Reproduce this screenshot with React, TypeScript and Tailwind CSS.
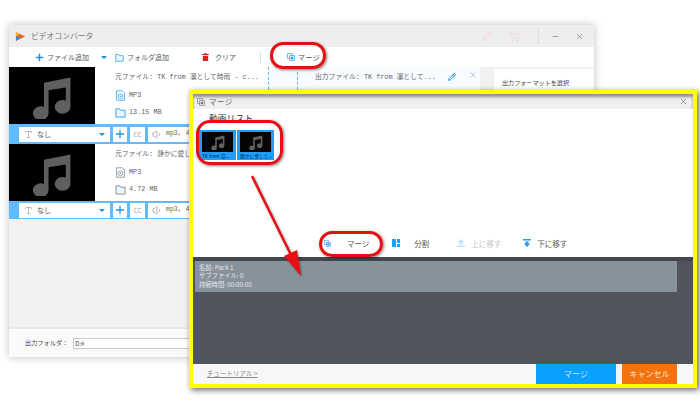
import { KeyRound, Minus, Pencil, Plus, ShoppingCart, Type, Volume1, X } from "lucide-react";

const font = "font-['Noto_Sans_CJK_JP','Noto_Sans',sans-serif]";
const mono = "font-['Liberation_Mono','Noto_Sans_CJK_JP',monospace]";

const NoteIcon = ({ className }: { className: string }) => (
  <svg viewBox="0 0 40 40" className={className}>
    <path
      fill="currentColor"
      d="M13 8.500 36 4v25.500a6.800 6 0 1 1-4-5.500V12.500L17 15v20a6.800 6 0 1 1-4-5.500z"
    />
  </svg>
);

const MergeIcon = ({ className }: { className: string }) => (
  <svg viewBox="0 0 12 12" className={className}>
    <rect x="1" y="1" width="7" height="7" fill="none" stroke="currentColor" />
    <rect x="4" y="4" width="7" height="7" fill="#fff" stroke="currentColor" />
    <rect x="5.500" y="5.500" width="4" height="4" fill="currentColor" />
  </svg>
);

const FolderIcon = ({ className }: { className: string }) => (
  <svg viewBox="0 0 12 12" className={className}>
    <path d="M1 2h4l1 1.500h5V11H1z" fill="#e8f5ff" stroke="currentColor" />
  </svg>
);

const DiscIcon = () => (
  <svg viewBox="0 0 14 14" className="h-[11px] w-[11px]">
    <path d="M2 1h7l3 3v9H2z" fill="none" stroke="currentColor" />
    <circle cx="7" cy="8" r="3" fill="none" stroke="currentColor" />
    <circle cx="7" cy="8" r="1" fill="currentColor" />
  </svg>
);

const Caret = ({ className }: { className: string }) => (
  <span className={`h-0 w-0 border-x-[3px] border-t-[3px] border-x-transparent border-t-[#1d8fe0] ${className}`} />
);

type TrackRowProps = { title: string; size: string; active?: boolean; compact?: boolean };

const TrackRow = ({ title, size, active, compact }: TrackRowProps) => (
  <div>
    <div className="flex h-[57px]">
      <div className="flex w-[86px] items-center justify-center bg-black">
        <NoteIcon className="h-[46px] w-[46px] text-[#5f5f5f]" />
      </div>
      <div className={`flex flex-col pl-[20px] text-[6.800px] text-[#666] ${mono}`}>
        <span className="mt-[5px] h-[10px] whitespace-nowrap leading-[10px]">{title}</span>
        <div className={`mt-[8px] flex h-[11px] items-center ${active ? "text-[#29a3f5]" : "text-[#7f8a94]"}`}>
          <DiscIcon />
          <span className="ml-[3px] text-[#666]">MP3</span>
        </div>
        <div className={`mt-[6px] flex h-[11px] items-center ${active ? "text-[#29a3f5]" : "text-[#8a8a8a]"}`}>
          <FolderIcon className="h-[11px] w-[11px]" />
          <span className="ml-[3px] text-[#666]">{size}</span>
        </div>
      </div>
    </div>
    <div className={`flex items-center gap-[2px] bg-[#62baff] pl-[10px] ${compact ? "h-[18px]" : "h-[20px]"}`}>
      <div className="flex h-[15px] w-[91px] items-center bg-white px-[5px] text-[7px] text-[#555]">
        <Type size={9} strokeWidth={1.2} className="text-[#777]" />
        <span className="ml-[4px]">なし</span>
        <Caret className="ml-auto" />
      </div>
      <div className="ml-[1px] flex h-[15px] w-[14px] items-center justify-center bg-white">
        <Plus size={12} strokeWidth={2.6} className="text-[#1b92e8]" />
      </div>
      <div className="ml-[1px] flex h-[15px] w-[15px] items-center justify-center bg-white text-[8px] text-[#b5b5b5]">cc</div>
      <div className={`ml-[1px] flex h-[15px] w-[50px] items-center bg-white pl-[4px] text-[6.500px] text-[#666] ${mono}`}>
        <Volume1 size={11} strokeWidth={1} />
        <span className="ml-[3px] whitespace-nowrap">mp3, 4</span>
      </div>
    </div>
  </div>
);

const MergeThumb = ({ label }: { label: string }) => (
  <div className="flex h-[30px] w-[37px] flex-col bg-[#1f9ffa] px-[3px] pt-[2px]">
    <div className="flex h-[20px] items-center justify-center bg-[#050505]">
      <NoteIcon className="h-[16px] w-[16px] text-[#606060]" />
    </div>
    <span className="mt-[1px] whitespace-nowrap text-[4.800px] leading-[6px] text-[#06264a]">{label}</span>
  </div>
);

export default function App() {
  return (
    <div className={`relative h-[407px] w-[700px] overflow-hidden bg-white ${font}`}>
      {/* main converter window */}
      <div className="absolute left-[9px] top-[25px] flex h-[332px] w-[585px] flex-col bg-[#f1f1f1] shadow-[0_0_8px_rgba(0,0,0,0.25)]">
        <div className="flex h-[22px] items-center bg-[#eeeeee] pl-[6px] text-[7.800px] text-[#777]">
          <svg viewBox="0 0 12 12" className="h-[11px] w-[11px]">
            <path d="M1 1l10 5-10 5z" fill="#ef5a2c" />
            <path d="M1 1l5 2.500L1 6z" fill="#f6b21b" />
            <path d="M1 6l5 1-5 4z" fill="#2b8fd8" />
          </svg>
          <span className="ml-[5px]">ビデオコンバータ</span>
          <div className="ml-auto flex items-center text-[#f3c9c4]">
            <KeyRound size={10} strokeWidth={1.2} />
            <ShoppingCart size={11} strokeWidth={1.2} className="ml-[17px]" />
            <div className="ml-[18px] h-[16px] w-px bg-[#dddddd]" />
            <Minus size={9} className="ml-[12px] text-[#888]" />
            <X size={9} className="ml-[15px] mr-[10px] text-[#888]" />
          </div>
        </div>
        <div className="flex h-[20px] items-center bg-white text-[7px] text-[#555]">
          <Plus size={11} strokeWidth={3} className="ml-[25px] text-[#1b92e8]" />
          <span className="ml-[2px]">ファイル追加</span>
          <Caret className="ml-[12px]" />
          <FolderIcon className="ml-[8px] h-[9px] w-[9px] text-[#29a3f5]" />
          <span className="ml-[3px]">フォルダ追加</span>
          <svg viewBox="0 0 10 12" className="ml-[33px] h-[8px] w-[7px] text-[#d8231f]">
            <path fill="currentColor" d="M3.500 0h3v1.500H10V3H0V1.500h3.500zM1 4h8v8H1z" />
          </svg>
          <span className="ml-[6px]">クリア</span>
          <div className="ml-[24px] h-[11px] w-px bg-[#dddddd]" />
          <MergeIcon className="ml-[26px] h-[8px] w-[8px] text-[#2a9df4]" />
          <span className="ml-[3px] tracking-[0.4px]">マージ</span>
        </div>
        <div className="flex">
          <div className="w-[471px] bg-white">
            <div className="relative">
              <TrackRow title="元ファイル: TK from 凛として時雨 - c..." size="13.15 MB" active />
              {/* dashed dividers, output name and row actions of the first track */}
              <div className={`absolute left-[259px] top-0 flex h-[57px] w-[212px] border-l border-dashed border-[#6db9f3] bg-[#f8fbff] pl-[28px] pt-[5px] text-[6.800px] leading-[10px] text-[#666] ${mono}`}>
                <div className="h-[57px] border-l border-dashed border-[#6db9f3]" />
                <span className="ml-[17px] whitespace-nowrap">出力ファイル: TK from 凛として...</span>
                <Pencil size={8} strokeWidth={3} className="absolute left-[179px] top-[6px] text-[#1f8fe8]" />
                <X size={8} className="absolute left-[200px] top-[4px] text-[#aaa]" />
              </div>
            </div>
            <TrackRow title="元ファイル: 静かに愛して..." size="4.72 MB" compact />
          </div>
          <div className="ml-[14px] mt-[2px] h-[50px] flex-1 bg-white pl-[8px] pt-[9px] text-[6.100px] text-[#444]">
            出力フォーマットを選択
          </div>
        </div>
        <div className="mt-auto flex h-[30px] items-center border-t-2 border-[#e8e8e8] bg-[#fafafa] pl-[16px] text-[6.200px] text-[#444]">
          出力フォルダ：
          <div className="ml-[5px] flex h-[11px] w-[300px] items-center border border-[#cccccc] bg-white pl-[1px] text-[6px]">
            D:¥
          </div>
        </div>
      </div>

      {/* merge dialog on top of the main window */}
      <div className="absolute left-[189px] top-[90px] flex h-[298px] w-[508px] flex-col border-[4px] border-[#ffff00] bg-white shadow-[2px_2px_6px_rgba(0,0,0,0.6)]">
        <div className="flex h-[15px] items-center bg-[#efefef] pl-[4px] text-[7.500px] text-[#666] shadow-[inset_0_3px_3px_rgba(0,0,0,0.4)]">
          <MergeIcon className="h-[8px] w-[8px] text-[#777]" />
          <span className="ml-[4px] tracking-[0.4px]">マージ</span>
          <X size={9} className="ml-auto mr-[5px] text-[#777]" />
        </div>
        <div className="flex flex-1 flex-col">
          <span className="ml-[16px] mt-[3px] text-[8.800px] leading-[14px] text-[#333]">動画リスト</span>
          <div className="ml-[6px] mt-[4px] flex gap-[1px]">
            <MergeThumb label="TK from 凛..." />
            <MergeThumb label="静かに愛して..." />
          </div>
          <div className="mb-[8px] mt-auto flex items-center pl-[131px] text-[7.500px] text-[#555]">
            <MergeIcon className="h-[7px] w-[7px] text-[#2a9df4]" />
            <span className="ml-[16px]">マージ</span>
            <span className="ml-[23px] flex h-[8px] w-[8px] gap-px">
              <span className="w-[4px] bg-[#1f9ffa]" />
              <span className="flex w-[3px] flex-col gap-px">
                <span className="h-[3.500px] bg-[#1f9ffa]" />
                <span className="h-[3.500px] bg-[#1f9ffa]" />
              </span>
            </span>
            <span className="ml-[14px]">分割</span>
            <svg viewBox="0 0 10 10" className="ml-[28px] h-[8px] w-[8px] text-[#bfe3fb]">
              <path fill="currentColor" d="M5 0l4 4H7v3H3V4H1zM0 8h10v2H0z" />
            </svg>
            <span className="ml-[6px] text-[#c4c4c4]">上に移す</span>
            <svg viewBox="0 0 10 10" className="ml-[22px] h-[8px] w-[8px] text-[#1f9ffa]">
              <path fill="currentColor" d="M0 0h10v2H0zM3 3h4v3h2l-4 4-4-4h2z" />
            </svg>
            <span className="ml-[6px]">下に移す</span>
          </div>
        </div>
        <div className="h-[107px] border-t-[4px] border-[#44474e] bg-[#50545c] pl-[2px]">
          <div className="flex h-[31px] w-[482px] flex-col justify-center bg-[#87929c] pl-[4px] text-[6.300px] leading-[8.500px] text-[#e4e8eb]">
            <span>名前: Pack 1</span>
            <span>サブファイル: 0</span>
            <span>持続時間: 00:00:00</span>
          </div>
        </div>
        <div className="flex h-[20px] items-stretch bg-[#f7f7f7]">
          <span className="ml-[14px] self-center text-[6.500px] text-[#888] underline">チュートリアル &gt;</span>
          <div className="ml-auto flex w-[80px] items-center justify-center bg-[#0aa0ff] text-[8px] text-[#cfeaff]">マージ</div>
          <div className="ml-[6px] mr-[16px] flex w-[55px] items-center justify-center bg-[#f5730f] text-[8px] text-[#ffe6d2]">キャンセル</div>
        </div>
      </div>

      {/* red callouts */}
      <div className="absolute left-[270px] top-[42px] h-[27px] w-[56px] rounded-[13px] border-[3px] border-[#e60f14] shadow-[1px_1px_3px_rgba(0,0,0,0.5)]" />
      <div className="absolute left-[196px] top-[120px] h-[45px] w-[87px] rounded-[14px] border-[3px] border-[#e60f14] shadow-[1px_1px_3px_rgba(0,0,0,0.5)]" />
      <div className="absolute left-[319px] top-[231px] h-[26px] w-[64px] rounded-[13px] border-[3px] border-[#e60f14] shadow-[1px_1px_3px_rgba(0,0,0,0.5)]" />
      <svg viewBox="0 0 700 407" className="pointer-events-none absolute left-0 top-0 h-[407px] w-[700px] drop-shadow-[1px_1px_1px_rgba(0,0,0,0.4)]">
        <path d="M252 176 L291 255" stroke="#e60f14" strokeWidth="2.500" fill="none" />
        <path d="M301 276 L284 256 L297 250z" fill="#e60f14" />
      </svg>
    </div>
  );
}
